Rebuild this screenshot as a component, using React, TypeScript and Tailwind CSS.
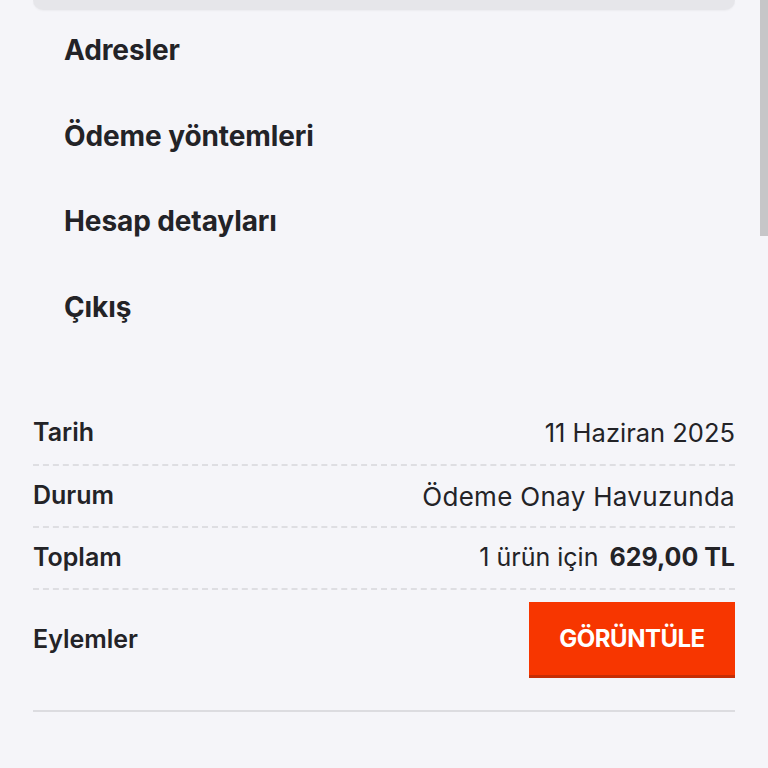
import React from "react";

export default function App() {
  const menu = ["Adresler", "Ödeme yöntemleri", "Hesap detayları", "Çıkış"];
  return (
    <div
      className="relative w-[768px] h-[768px] overflow-hidden bg-[#f5f5f9] text-[#232327]"
      style={{ fontFamily: "Inter, 'Noto Sans', sans-serif" }}
    >
      <div className="absolute right-0 top-0 w-[8px] h-[236px] bg-[#c6c6c8]" />
      <div className="mx-[33px] h-[10px] rounded-b-[14px] bg-[#e6e6ea] shadow-[0_1px_2px_rgba(0,0,0,0.04)]" />
      <div className="flex flex-col pl-[64px] pt-[20px]">
        {menu.map((m) => (
          <div key={m} className="h-[85.5px] text-[28px] font-bold leading-[40px] tracking-[-0.1px]">
            {m}
          </div>
        ))}
      </div>
      <div className="mx-[33px] mt-[30px] flex flex-col text-[25px]">
        <div className="flex items-center justify-between h-[64px] border-b-2 border-dashed border-[#dedee2]">
          <span className="font-semibold">Tarih</span>
          <span className="text-[25.5px]">11 Haziran 2025</span>
        </div>
        <div className="flex items-center justify-between h-[62px] border-b-2 border-dashed border-[#dedee2]">
          <span className="font-semibold">Durum</span>
          <span className="text-[26px] tracking-[0.3px]">Ödeme Onay Havuzunda</span>
        </div>
        <div className="flex items-center justify-between h-[62px] border-b-2 border-dashed border-[#dedee2]">
          <span className="font-semibold">Toplam</span>
          <span>
            1 ürün için <span className="font-bold ml-[4px]">629,00 TL</span>
          </span>
        </div>
        <div className="flex items-center justify-between pt-[12px] pb-[32px] border-b-2 border-[#dcdce0]">
          <span className="font-semibold">Eylemler</span>
          <button className="w-[206px] h-[76px] bg-[#f73600] border-b-[3px] border-[#c62e05] text-white font-bold text-[24px] tracking-[-0.5px]">
            GÖRÜNTÜLE
          </button>
        </div>
      </div>
    </div>
  );
}
